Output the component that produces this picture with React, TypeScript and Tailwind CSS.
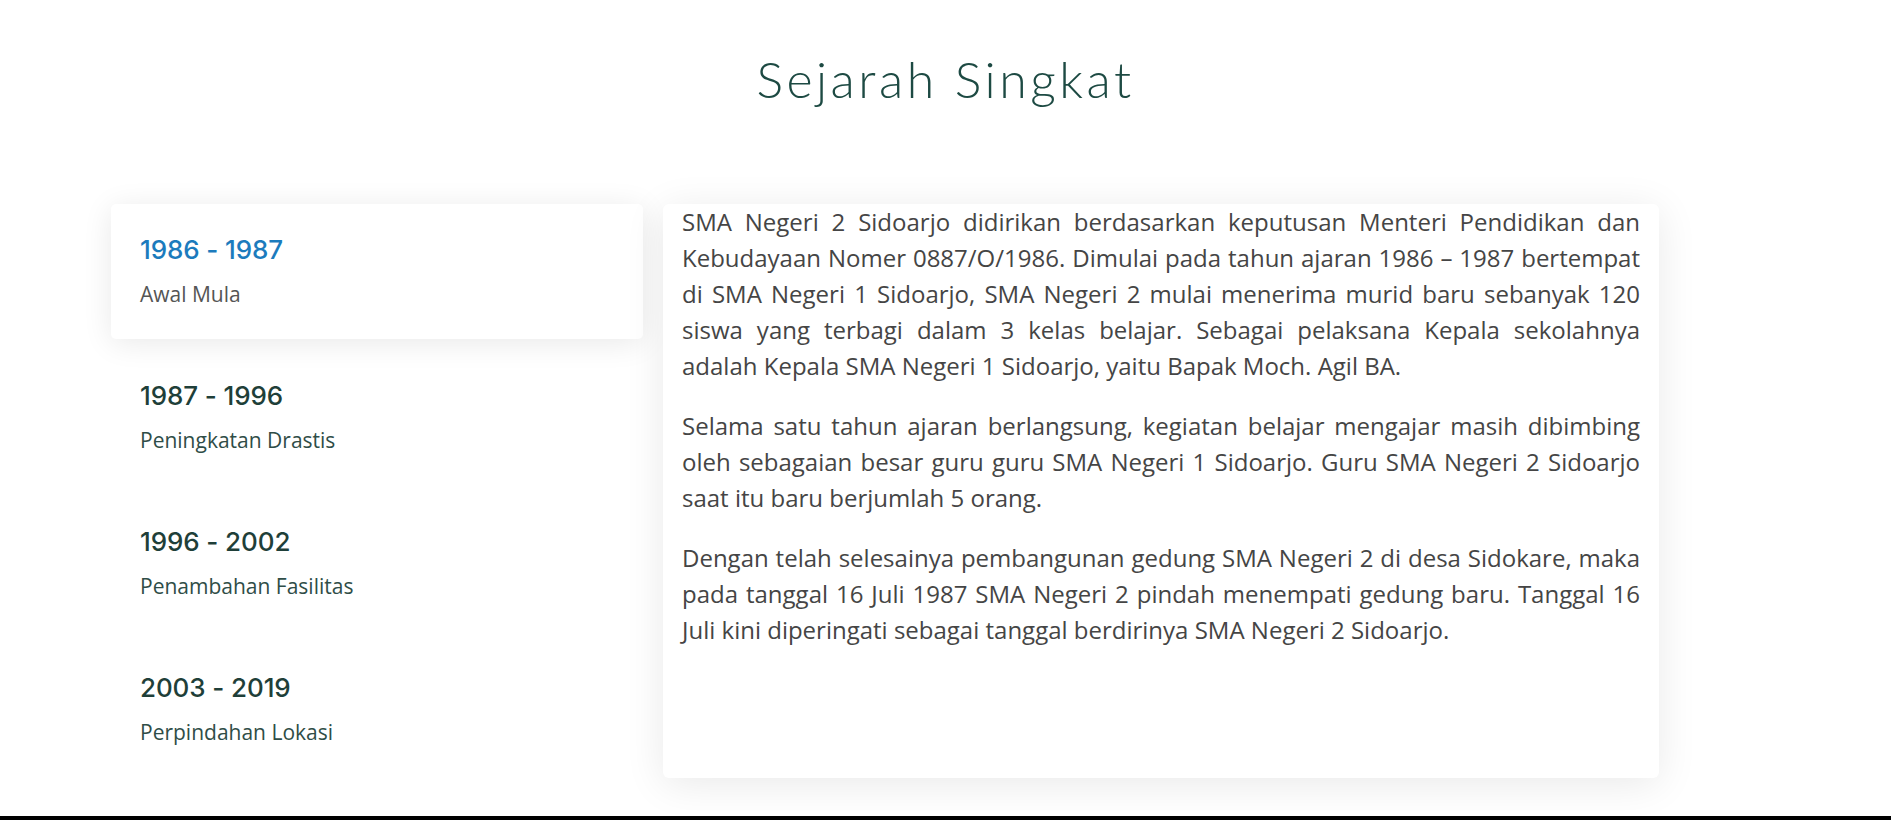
import React from "react";

const items = [
  { year: "1986 - 1987", title: "Awal Mula", active: true },
  { year: "1987 - 1996", title: "Peningkatan Drastis", active: false },
  { year: "1996 - 2002", title: "Penambahan Fasilitas", active: false },
  { year: "2003 - 2019", title: "Perpindahan Lokasi", active: false },
];

export default function App() {
  return (
    <div className="w-full bg-white">
      <section className="pt-[50px] pb-[38px]">
        <h1 className="text-center font-['Lato',sans-serif] font-light text-[50px] leading-[58px] tracking-[3.5px] text-[#1d4a43]">
          Sejarah Singkat
        </h1>
        <div className="mt-[96px] ml-[111px] flex gap-[20px]">
          <div className="w-[532px] flex flex-col gap-[11px]">
            {items.map((it) => (
              <div
                key={it.year}
                className={
                  it.active
                    ? "h-[135px] rounded-[5px] bg-white pl-[29px] pt-[30px] shadow-[0_4px_30px_rgba(0,0,0,0.09)]"
                    : "h-[135px] pl-[29px] pt-[30px]"
                }
              >
                <div
                  className={
                    it.active
                      ? "font-['Inter',sans-serif] font-medium text-[26px] leading-[32px] tracking-[-0.1px] text-[#1c7bbd]"
                      : "font-['Inter',sans-serif] font-medium text-[26px] leading-[32px] tracking-[-0.1px] text-[#1f3f39]"
                  }
                >
                  {it.year}
                </div>
                <div
                  className={
                    it.active
                      ? "mt-[14px] font-['Open_Sans',sans-serif] text-[21px] leading-[28px] text-[#555]"
                      : "mt-[14px] font-['Open_Sans',sans-serif] text-[21px] leading-[28px] text-[#2f4d47]"
                  }
                >
                  {it.title}
                </div>
              </div>
            ))}
          </div>
          <div className="w-[996px] h-[574px] rounded-[6px] bg-white px-[19px] shadow-[0_6px_40px_rgba(0,0,0,0.09)] font-['Open_Sans',sans-serif] text-[24px] leading-[36px] text-[#454545] text-justify">
            <p className="mb-[24px]">
              SMA Negeri 2 Sidoarjo didirikan berdasarkan keputusan Menteri Pendidikan dan Kebudayaan Nomer 0887/O/1986. Dimulai pada tahun ajaran 1986 – 1987 bertempat di SMA Negeri 1 Sidoarjo, SMA Negeri 2 mulai menerima murid baru sebanyak 120 siswa yang terbagi dalam 3 kelas belajar. Sebagai pelaksana Kepala sekolahnya adalah Kepala SMA Negeri 1 Sidoarjo, yaitu Bapak Moch. Agil BA.
            </p>
            <p className="mb-[24px]">
              Selama satu tahun ajaran berlangsung, kegiatan belajar mengajar masih dibimbing oleh sebagaian besar guru guru SMA Negeri 1 Sidoarjo. Guru SMA Negeri 2 Sidoarjo saat itu baru berjumlah 5 orang.
            </p>
            <p>
              Dengan telah selesainya pembangunan gedung SMA Negeri 2 di desa Sidokare, maka pada tanggal 16 Juli 1987 SMA Negeri 2 pindah menempati gedung baru. Tanggal 16 Juli kini diperingati sebagai tanggal berdirinya SMA Negeri 2 Sidoarjo.
            </p>
          </div>
        </div>
      </section>
      <footer className="h-[200px] bg-black" />
    </div>
  );
}
